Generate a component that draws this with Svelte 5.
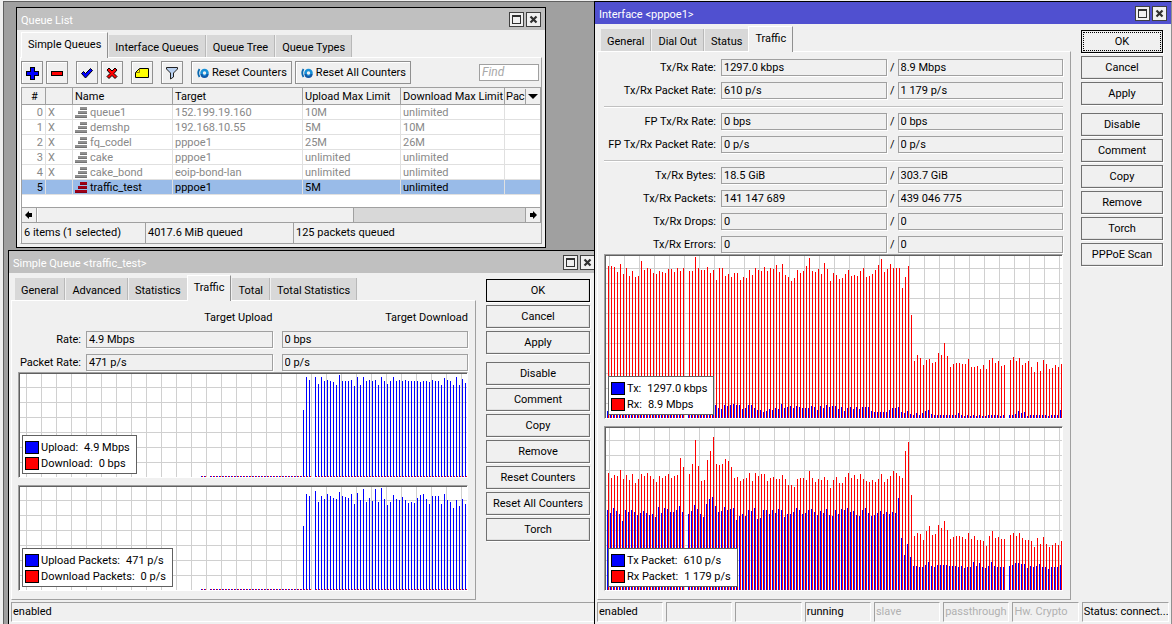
<script>
  const queueTabs = ['Simple Queues', 'Interface Queues', 'Queue Tree', 'Queue Types'];
  const detailTabs = ['General', 'Advanced', 'Statistics', 'Traffic', 'Total', 'Total Statistics'];
  const ifaceTabs = ['General', 'Dial Out', 'Status', 'Traffic'];

  const queues = [
    { name: 'queue1', target: '152.199.19.160', up: '10M', down: 'unlimited', disabled: true },
    { name: 'demshp', target: '192.168.10.55', up: '5M', down: '10M', disabled: true },
    { name: 'fq_codel', target: 'pppoe1', up: '25M', down: '26M', disabled: true },
    { name: 'cake', target: 'pppoe1', up: 'unlimited', down: 'unlimited', disabled: true },
    { name: 'cake_bond', target: 'eoip-bond-lan', up: 'unlimited', down: 'unlimited', disabled: true },
    { name: 'traffic_test', target: 'pppoe1', up: '5M', down: 'unlimited', disabled: false }
  ];
  let selected = $state(5);

  const detailActions = [
    ['OK', 'Cancel', 'Apply'],
    ['Disable', 'Comment', 'Copy', 'Remove', 'Reset Counters', 'Reset All Counters', 'Torch']
  ];
  const ifaceActions = [
    ['OK', 'Cancel', 'Apply'],
    ['Disable', 'Comment', 'Copy', 'Remove', 'Torch', 'PPPoE Scan']
  ];

  const detailFields = [
    { label: 'Rate', up: '4.9 Mbps', down: '0 bps' },
    { label: 'Packet Rate', up: '471 p/s', down: '0 p/s' }
  ];

  const ifaceGroups = [
    [
      { label: 'Tx/Rx Rate', tx: '1297.0 kbps', rx: '8.9 Mbps' },
      { label: 'Tx/Rx Packet Rate', tx: '610 p/s', rx: '1 179 p/s' }
    ],
    [
      { label: 'FP Tx/Rx Rate', tx: '0 bps', rx: '0 bps' },
      { label: 'FP Tx/Rx Packet Rate', tx: '0 p/s', rx: '0 p/s' }
    ],
    [
      { label: 'Tx/Rx Bytes', tx: '18.5 GiB', rx: '303.7 GiB' },
      { label: 'Tx/Rx Packets', tx: '141 147 689', rx: '439 046 775' },
      { label: 'Tx/Rx Drops', tx: '0', rx: '0' },
      { label: 'Tx/Rx Errors', tx: '0', rx: '0' }
    ]
  ];

  const ifaceStatus = [
    { text: 'enabled', on: true },
    { text: '', on: true },
    { text: '', on: true },
    { text: 'running', on: true },
    { text: 'slave', on: false },
    { text: 'passthrough', on: false },
    { text: 'Hw. Crypto', on: false },
    { text: 'Status: connect...', on: true }
  ];

  // graph samples, null is a missed poll
  const idle = [1, 1, null, ...Array(31).fill(1)];
  const zeros = [1, 1, null, ...Array(34).fill(1), null, ...Array(51).fill(1)];
  const upload = [
    ...idle, 67, 100, 97, null, 100, 93, 100, 96, 97, 96, 95, 92, 102, 96, 96, 96, 97, 91, 100, 92, 100, 96, 97, 96,
    97, 92, 100, 96, 93, 96, 100, 96, 97, 96, 97, 96, 96, 96, 96, 95, 96, 96, 95, 97, 96, 96, 92, 99, 97, 96, 92, 100,
    92, 98, 94
  ];
  const uploadPackets = [
    ...idle, 64, 96, 94, null, 99, 88, 94, 91, 96, 94, 92, 91, 98, 94, 93, 92, 96, 86, 97, 90, 101, 88, 92, 89,
    101, 88, 102, 91, 85, 88, 95, 91, 90, 93, 90, 87, 88, 87, 92, 95, 96, 91, 86, 94, 94, 94, 86, 96, 90, 88, 82, 90,
    84, 91, 86
  ];
  const tx = [
    7, 10, 9, 12, 10, 9, 11, 12, 10, 9, 10, 11, 12, 10, 9, 10, 11, 12, 10, 9,
    10, 11, 9, 12, 10, 11, null, 10, 12, 13, 11, 10, 9, 12, 11, 10, 13, 10, 9, 13,
    12, 13, 14, 13, 13, 9, 10, 13, 13, 10, 8, 8, 6, 7, 9, 8, 10, 9, 14, 10,
    11, 12, 10, 12, 11, 10, 10, 10, 12, 11, 8, 12, 10, 13, 11, 12, 12, 9, 11, 7,
    10, 11, 9, 11, 9, 11, 11, 11, 7, 6, 6, 6, 6, 6, 8, 10, 10, 11, 6, 5,
    7, 4, 3, 5, 3, 5, 7, 8, 4, 3, 3, 3, 3, 3, 3, 3, 3, 5, 3, 2,
    3, 2, 3, 2, 3, 2, 2, 3, 3, 3, 3, 2, 3, null, 3, 3, 4, 7, 5, 6,
    2, 3, 3, 3, 3, 3, 3, 2, 3, 3, 3, 8
  ];
  const rx = [
    152, 152, 151, 146, 154, 144, 150, 142, 147, 141, 142, 157, 148, 150, 149, 145, 144, 147, 146, 145,
    149, 149, 146, 150, 147, 150, null, 147, 147, 161, 150, 148, 148, 151, 145, 148, 138, 150, 150, 142,
    144, 141, 145, 145, 138, 141, 140, 148, 143, 150, 148, 147, 151, 147, 150, 149, 153, 146, 154, 143,
    141, 137, 140, 148, 145, 147, 152, 160, 147, 146, 149, 144, 155, 149, 137, 145, 143, 139, 140, 144,
    148, 142, 143, 142, 147, 150, 141, 142, 144, 148, 153, 159, 146, 149, 154, 150, 150, 150, 130, 141,
    152, 103, 57, 63, 60, 53, 58, 59, 55, 56, 65, 63, 75, 62, 51, 54, 55, 55, 54, 54,
    59, 51, 51, 52, 49, 53, 49, 58, 60, 55, 57, 52, 53, null, 58, 61, 57, 60, 53, 55,
    57, 51, 46, 56, 47, 58, 54, 49, 50, 53, 51, 54
  ];
  const txPackets = [
    80, 77, 82, 79, 76, 69, 80, 78, 80, 78, 75, 77, 79, 77, 75, 76, 73, 83, 77, 82,
    81, 78, 78, 80, 84, 78, null, 76, 79, 85, 81, 76, 73, 86, 91, 93, 84, 78, 79, 83,
    80, 81, 82, 70, 74, 76, 74, 80, 79, 82, 71, 72, 80, 80, 76, 80, 77, 81, 80, 73,
    76, 76, 78, 82, 80, 76, 77, 80, 81, 78, 75, 79, 77, 81, 75, 74, 80, 76, 81, 80,
    82, 78, 79, 75, 74, 80, 82, 77, 74, 75, 77, 79, 76, 78, 76, 78, 77, 92, 52, 35,
    46, 33, 24, 24, 23, 23, 25, 28, 24, 23, 25, 25, 25, 25, 24, 24, 24, 23, 24, 22,
    23, 23, 28, 24, 27, 23, 22, 24, 28, 24, 23, 23, 23, null, 24, 25, 27, 27, 26, 26,
    22, 24, 23, 24, 26, 23, 23, 21, 23, 23, 23, 25
  ];
  const rxPackets = [
    117, 112, 115, 114, 120, 111, 115, 110, 116, 107, 111, 116, 114, 117, 114, 111, 108, 114, 112, 114,
    116, 112, 114, 115, 132, 123, null, 116, 126, 150, 124, 109, 110, 130, 139, 153, 126, 125, 126, 131,
    129, 123, 112, 113, 109, 111, 112, 117, 109, 117, 114, 116, 116, 109, 112, 113, 111, 111, 115, 111,
    105, 105, 103, 111, 112, 112, 110, 119, 112, 108, 111, 110, 113, 110, 102, 110, 113, 107, 107, 113,
    117, 112, 115, 111, 116, 111, 109, 108, 110, 108, 111, 116, 108, 111, 114, 119, 117, 114, 112, 139,
    148, 95, 54, 57, 56, 50, 59, 64, 55, 56, 65, 62, 69, 60, 51, 53, 54, 54, 53, 51,
    57, 51, 54, 50, 50, 49, 44, 54, 59, 52, 53, 51, 51, null, 55, 57, 54, 57, 52, 50,
    50, 49, 43, 52, 46, 53, 46, 43, 45, 47, 45, 49
  ];

  // one sample every 3px, each bar 1px wide
  function bars(values, start, height) {
    return values.map((v, i) => (v === null ? '' : `M${start + i * 3} ${height}v${-v}h1v${v}z`)).join('');
  }
</script>

{#snippet titlebar(title)}
  <header class="titlebar">
    <h2>{title}</h2>
    <button class="win-btn" aria-label="Maximize">
      <svg viewBox="0 0 13 13" width="13" height="13" shape-rendering="crispEdges"><path d="M2 2h9v9h-9z M3 4v6h7v-6z" fill="#303030" fill-rule="evenodd" /></svg>
    </button>
    <button class="win-btn" aria-label="Close">
      <svg viewBox="0 0 13 13" width="13" height="13"><path d="M3.5 3.5l6 6M9.5 3.5l-6 6" stroke="#303030" stroke-width="2.2" /></svg>
    </button>
  </header>
{/snippet}

{#snippet tabbar(tabs, active)}
  <div class="tabs" role="tablist">
    {#each tabs as tab}
      <button class="tab" class:active={tab === active} role="tab" aria-selected={tab === active}>{tab}</button>
    {/each}
  </div>
{/snippet}

{#snippet actions(groups, focus)}
  <div class="actions">
    {#each groups as group}
      <div class="action-group">
        {#each group as action}
          <button class="action" class:default={action === 'OK'} class:focused={focus && action === 'OK'}>{action}</button>
        {/each}
      </div>
    {/each}
  </div>
{/snippet}

{#snippet graph(blue, red, start, height, legend)}
  <div class="graph">
    <svg width="100%" {height} shape-rendering="crispEdges">
      <path d={bars(red, start + 1, height)} fill="#f00" />
      <path d={bars(blue, start, height)} fill="#00f" />
    </svg>
    <div class="legend">
      {#each legend as item, i}
        <div class="legend-row"><span class="swatch" class:red={i === 1}></span>{item.name}:<span class="value">{item.value}</span></div>
      {/each}
    </div>
  </div>
{/snippet}

{#snippet counterIcon()}
  <svg viewBox="0 0 14 12" width="14" height="12" fill="none">
    <path d="M3.5 2Q1 6 3.5 10" stroke="#0868b0" stroke-width="1.8" />
    <circle cx="8.5" cy="6" r="3" stroke="#1890d8" stroke-width="2.6" />
    <path d="M5.5 7A3 3 0 0 0 11.5 7" stroke="#1058a8" stroke-width="2" />
  </svg>
{/snippet}

<main class="desktop">
  <section class="window queue-list">
    {@render titlebar('Queue List')}
    {@render tabbar(queueTabs, 'Simple Queues')}
    <div class="panel list-panel">
      <div class="toolbar">
        <button class="tool" aria-label="Add">
          <svg viewBox="0 0 14 14" width="14" height="14" shape-rendering="crispEdges"><path d="M5 1h5v4h4v5h-4v4h-5v-4h-4v-5h4z" /><path d="M6 2h3v4h4v3h-4v4h-3v-4h-4v-3h4z" fill="#00f" /></svg>
        </button>
        <button class="tool" aria-label="Remove">
          <svg viewBox="0 0 14 14" width="14" height="14" shape-rendering="crispEdges"><path d="M1 5h12v5h-12z" /><path d="M2 6h10v3h-10z" fill="#f00" /></svg>
        </button>
        <button class="tool split" aria-label="Enable">
          <svg viewBox="0 0 14 14" width="14" height="14"><path d="M1.5 7.5l2-2 2 2 5-5 2 2-7 7.5z" fill="#00f" stroke="#000" /></svg>
        </button>
        <button class="tool" aria-label="Disable">
          <svg viewBox="0 0 14 14" width="14" height="14"><path d="M2 4l2-2 3 3 3-3 2 2-3 3.500 3 3-2 2-3-3-3 3-2-2 3-3z" fill="#f00" stroke="#000" /></svg>
        </button>
        <button class="tool split" aria-label="Comment">
          <svg viewBox="0 0 14 14" width="14" height="14"><path d="M4.5 2.5h9v9h-13v-5z" fill="#ff0" stroke="#000" /><path d="M4.5 3v3.5h-3.5" fill="none" stroke="#887800" /></svg>
        </button>
        <button class="tool split" aria-label="Filter">
          <svg viewBox="0 0 14 14" width="14" height="14"><path d="M1.5 1.5h11v1.5l-4 4v4l-3 2v-6l-4-4z" fill="#b8d0f0" stroke="#202020" /></svg>
        </button>
        <button class="tool wide split">{@render counterIcon()}Reset Counters</button>
        <button class="tool wide">{@render counterIcon()}Reset All Counters</button>
        <input class="find" type="text" placeholder="Find" aria-label="Find" />
      </div>

      <div class="table-box">
        <table>
          <thead>
            <tr>
              <th class="num">#</th>
              <th class="flag"></th>
              <th class="name">Name</th>
              <th class="target">Target</th>
              <th class="up">Upload Max Limit</th>
              <th class="down">Download Max Limit</th>
              <th class="rest"><div class="rest-head">Pac<button class="columns" aria-label="Columns"></button></div></th>
            </tr>
          </thead>
          <tbody>
            {#each queues as queue, i}
              <tr class:disabled={queue.disabled} class:selected={selected === i} onclick={() => (selected = i)}>
                <td class="num">{i}</td>
                <td>{queue.disabled ? 'X' : ''}</td>
                <td>
                  <div class="queue-name">
                    <svg viewBox="0 0 12 12" width="12" height="12" shape-rendering="crispEdges" fill={queue.disabled ? '#909090' : '#a00018'}>
                      <path d="M5 0h7v3h-7zM3 4h9v3h-9zM0 8h12v3h-12z" />
                      <path d="M5 2h7v1h-7zM3 6h9v1h-9zM0 10h12v1h-12z" fill="#000" opacity="0.2" />
                    </svg>
                    {queue.name}
                  </div>
                </td>
                <td>{queue.target}</td>
                <td>{queue.up}</td>
                <td>{queue.down}</td>
                <td></td>
              </tr>
            {/each}
          </tbody>
        </table>
        <div class="scrollbar">
          <button class="scroll-btn" aria-label="Scroll left">
            <svg viewBox="0 0 8 8" width="8" height="8"><path d="M0 4l4-4v2h3v4h-3v2z" /></svg>
          </button>
          <div class="track"><div class="thumb"></div></div>
          <button class="scroll-btn right" aria-label="Scroll right">
            <svg viewBox="0 0 8 8" width="8" height="8"><path d="M8 4l-4-4v2h-3v4h3v2z" /></svg>
          </button>
        </div>
      </div>

      <footer class="list-status">
        <span>6 items (1 selected)</span>
        <span>4017.6 MiB queued</span>
        <span>125 packets queued</span>
      </footer>
    </div>
  </section>

  <section class="window queue-detail">
    {@render titlebar('Simple Queue <traffic_test>')}
    <div class="columns-layout">
      <div class="left">
        {@render tabbar(detailTabs, 'Traffic')}
        <div class="panel detail-panel">
          <div class="pair-row">
            <span></span>
            <span>Target Upload</span>
            <span>Target Download</span>
          </div>
          {#each detailFields as field, i}
            <div class="pair-row">
              <label for="detail-{i}">{field.label}:</label>
              <input id="detail-{i}" value={field.up} readonly />
              <input value={field.down} aria-label="{field.label} download" readonly />
            </div>
          {/each}
          {@render graph(upload, zeros, 181, 103, [{ name: 'Upload', value: '4.9 Mbps' }, { name: 'Download', value: '0 bps' }])}
          {@render graph(uploadPackets, zeros, 181, 103, [{ name: 'Upload Packets', value: '471 p/s' }, { name: 'Download Packets', value: '0 p/s' }])}
        </div>
      </div>
      {@render actions(detailActions, false)}
    </div>
    <footer class="status"><span class="cell">enabled</span></footer>
  </section>

  <section class="window iface current">
    {@render titlebar('Interface <pppoe1>')}
    <div class="columns-layout">
      <div class="left">
        {@render tabbar(ifaceTabs, 'Traffic')}
        <div class="panel iface-panel">
          {#each ifaceGroups as group, g}
            <div class="group">
              {#each group as field, i}
                <div class="slash-row">
                  <label for="iface-{g}-{i}">{field.label}:</label>
                  <input id="iface-{g}-{i}" value={field.tx} readonly />
                  <span>/</span>
                  <input value={field.rx} aria-label="{field.label} received" readonly />
                </div>
              {/each}
            </div>
          {/each}
          {@render graph(tx, rx, 1, 162, [{ name: 'Tx', value: '1297.0 kbps' }, { name: 'Rx', value: '8.9 Mbps' }])}
          {@render graph(txPackets, rxPackets, 1, 162, [{ name: 'Tx Packet', value: '610 p/s' }, { name: 'Rx Packet', value: '1 179 p/s' }])}
        </div>
      </div>
      {@render actions(ifaceActions, true)}
    </div>
    <footer class="status">
      {#each ifaceStatus as item}
        <span class="cell" class:off={!item.on}>{item.text}</span>
      {/each}
    </footer>
  </section>
</main>

<style>
  :global(body) {
    margin: 0;
    background: #f0f0f0;
  }
  .desktop {
    position: relative;
    min-height: 100vh;
    overflow: hidden;
    box-sizing: border-box;
    background: #a0a0a0;
    border-left: 3px solid #f0f0f0;
    border-top: 1px solid #f0f0f0;
    box-shadow: inset 1px 1px 0 #606060;
    font: 11px/15px Roboto, "Liberation Sans", sans-serif;
    color: #000;
  }
  button, input {
    box-sizing: border-box;
    margin: 0;
    padding: 0;
    font: inherit;
    color: inherit;
    border-radius: 0;
  }
  svg { display: block; flex-shrink: 0; }

  .window {
    position: absolute;
    box-sizing: border-box;
    display: flex;
    flex-direction: column;
    background: #f0f0f0;
    border: 1px solid #000;
  }
  .queue-list { left: 13px; top: 6px; width: 530px; }
  .queue-detail { left: 5px; top: 249px; width: 592px; }
  .iface { left: 591px; right: 0; top: 0; border-right-color: #909090; }

  .titlebar {
    display: flex;
    align-items: center;
    gap: 2px;
    height: 22px;
    padding: 0 4px;
    background: #c0c0c0;
    color: #fff;
  }
  .current .titlebar { background: #5050d0; }
  .titlebar h2 { flex: 1; margin: 0; padding-top: 2px; font-size: 11px; font-weight: 400; }
  .win-btn {
    width: 15px;
    height: 15px;
    background: #f0f0f0;
    border: 1px solid #404040;
  }

  .tabs {
    display: flex;
    align-items: flex-end;
    height: 27px;
    padding-left: 4px;
  }
  .tab {
    height: 22px;
    padding: 2px 6px 0;
    background: #d8d8d8;
    border: solid;
    border-width: 0 1px 0 0;
    border-color: #b8b8b8;
    margin-right: 1px;
    white-space: nowrap;
  }
  .tab.active {
    position: relative;
    height: 26px;
    margin: 0 1px -1px -2px;
    padding: 0 6px 2px;
    background: #f0f0f0;
    border: 1px solid #fff;
    border-bottom: 0;
    border-right-color: #909090;
  }
  .tab.active:first-child { margin-left: 0; }
  .panel {
    border: 1px solid;
    border-color: #fff #a0a0a0 #a0a0a0 #fff;
  }

  .list-panel { margin: 0 3px 3px; }
  .toolbar {
    display: flex;
    align-items: center;
    gap: 3px;
    padding: 3px 2px 3px 0;
  }
  .tool {
    display: flex;
    align-items: center;
    justify-content: center;
    gap: 2px;
    width: 22px;
    height: 23px;
    background: #f0f0f0;
    border: 1px solid #909090;
    box-shadow: inset 1px 1px 0 #fff;
    white-space: nowrap;
  }
  .tool.split { margin-left: 5px; }
  .tool.wide { width: auto; padding: 0 4px; }
  .find {
    width: 60px;
    height: 17px;
    margin-left: auto;
    padding: 0 2px;
    background: #fff;
    border: 1px solid #a0a0a0;
  }
  .find::placeholder { color: #a8a8a8; font-style: italic; font-size: 12px; opacity: 1; }

  .table-box { border: 1px solid #a0a0a0; background: #fff; }
  table {
    width: 100%;
    table-layout: fixed;
    border-collapse: separate;
    border-spacing: 0;
    margin-bottom: 12px;
  }
  th {
    height: 15px;
    padding: 1px 0 0 2px;
    background: #f0f0f0;
    border-right: 1px solid #a0a0a0;
    border-bottom: 1px solid #a0a0a0;
    font-weight: 400;
    text-align: left;
    white-space: nowrap;
    overflow: hidden;
  }
  th.num { width: 21px; text-align: center; padding-right: 0; }
  th.flag { width: 24px; }
  th.name { width: 97px; }
  th.target { width: 127px; }
  th.up { width: 95px; }
  th.down { width: 101px; }
  th.rest { padding-left: 1px; border-right: 0; }
  .rest-head { display: flex; justify-content: space-between; }
  .columns {
    position: relative;
    width: 15px;
    background: #f0f0f0;
    border: 0;
    border-left: 1px solid #a0a0a0;
  }
  .columns::before {
    content: '';
    position: absolute;
    left: 2px;
    top: 5px;
    border: 5px solid transparent;
    border-top-color: #000;
    border-bottom: 0;
  }
  td {
    height: 12px;
    line-height: 12px;
    padding: 2px 0 0 2px;
    border-right: 1px solid #e0e0e0;
    border-bottom: 1px solid #e0e0e0;
    white-space: nowrap;
  }
  td:last-child { border-right: 0; }
  td.num { padding: 2px 2px 0 0; text-align: right; }
  .queue-name { display: flex; align-items: center; gap: 3px; }
  .disabled { color: #888; }
  .selected { background: #99bbe8; }

  .scrollbar { display: flex; height: 14px; border-top: 1px solid #a0a0a0; }
  .scroll-btn {
    display: flex;
    align-items: center;
    justify-content: center;
    width: 15px;
    height: 14px;
    background: #f0f0f0;
    border: 0;
    border-right: 1px solid #a0a0a0;
  }
  .scroll-btn.right { border-right: 0; border-left: 1px solid #a0a0a0; }
  .track { flex: 1; background: #d8d8d8; }
  .thumb {
    box-sizing: border-box;
    width: 65%;
    height: 100%;
    background: #f0f0f0;
    border-left: 1px solid #fff;
    border-right: 1px solid #a0a0a0;
  }
  .list-status { display: flex; height: 20px; line-height: 20px; }
  .list-status span { padding-left: 2px; border-left: 1px solid #a0a0a0; }
  .list-status span:nth-child(1) { width: 121px; }
  .list-status span:nth-child(2) { width: 145px; }

  .columns-layout { display: flex; }
  .left { flex: 1; min-width: 0; }
  .columns-layout .tabs { padding-left: 6px; }
  .columns-layout .panel { margin-left: 2px; }

  .detail-panel { padding: 9px 7px 8px 6px; }
  .pair-row {
    display: grid;
    grid-template-columns: 68px 1fr 9px 1fr;
    align-items: center;
    margin-bottom: 6px;
    text-align: right;
  }
  .pair-row > :nth-child(3) { grid-column: 4; }
  .pair-row:nth-child(3) { margin-bottom: 1px; }
  .pair-row label, .slash-row label { padding-right: 5px; }
  .pair-row input, .slash-row input {
    min-width: 0;
    height: 17px;
    padding: 0 2px;
    background: #f0f0f0;
    border: 1px solid #a0a0a0;
    box-shadow: 1px 1px 0 #fff;
  }

  .iface-panel { padding: 7px 7px 8px 6px; }
  .group {
    display: flex;
    flex-direction: column;
    gap: 6px;
    padding-bottom: 7px;
    margin-bottom: 6px;
    border-bottom: 1px solid #c0c0c0;
    box-shadow: 0 1px 0 #fff;
  }
  .group:nth-child(3) { padding-bottom: 1px; margin-bottom: 0; border: 0; box-shadow: none; }
  .slash-row {
    display: grid;
    grid-template-columns: 117px 1fr 11px 1fr;
    align-items: center;
    text-align: right;
  }
  .slash-row span { padding-right: 3px; }

  .graph {
    position: relative;
    border: 1px solid #a0a0a0;
    border-right-color: #fff;
    border-bottom-color: #fff;
    margin-bottom: 7px;
  }
  .graph:last-child { margin-bottom: 0; }
  .graph > svg {
    width: calc(100% - 1px);
    border-left: 1px solid #606060;
    border-top: 1px solid #606060;
    background:
      linear-gradient(#d0d0d0 1px, transparent 1px) 0 13px / 100% 15px,
      linear-gradient(90deg, #d0d0d0 1px, transparent 1px) 6px 0 / 15px 100%,
      #fff;
  }
  .iface .graph > svg { background-position: 0 12px, 3px 0, 0 0; }
  .legend {
    position: absolute;
    left: 3px;
    bottom: 3px;
    padding: 3px 6px 2px 2px;
    background: #fff;
    border: 1px solid #606060;
  }
  .legend-row { display: flex; align-items: center; height: 16px; white-space: nowrap; }
  .swatch {
    box-sizing: border-box;
    width: 14px;
    height: 13px;
    margin-right: 2px;
    background: #00f;
    border: 1px solid #000;
  }
  .swatch.red { background: #f00; }
  .value { margin-left: 6px; }

  .actions {
    display: flex;
    flex-direction: column;
    gap: 8px;
    width: 104px;
    padding: 6px 9px 0 10px;
  }
  .iface .actions { width: 82px; padding: 6px 8px 0 10px; }
  .action-group { display: flex; flex-direction: column; gap: 3px; }
  .action {
    height: 23px;
    background: #f0f0f0;
    border: 1px solid #707070;
    box-shadow: inset -1px -1px 0 #e0e0e0, 1px 1px 0 #fff;
    white-space: nowrap;
  }
  .action.default { border-color: #000; }
  .action.focused { outline: 1px dotted #000; outline-offset: -3px; }

  .status {
    display: flex;
    gap: 3px;
    margin: 2px;
  }
  .cell {
    box-sizing: border-box;
    flex: 66 1 0;
    min-width: 0;
    height: 20px;
    padding-left: 1px;
    line-height: 18px;
    border: 1px solid #a0a0a0;
    border-right-color: #fff;
    border-bottom-color: #fff;
    white-space: nowrap;
    overflow: hidden;
  }
  .cell:nth-child(8) { flex-grow: 88; }
  .cell.off { color: #b0b0b0; }
</style>
